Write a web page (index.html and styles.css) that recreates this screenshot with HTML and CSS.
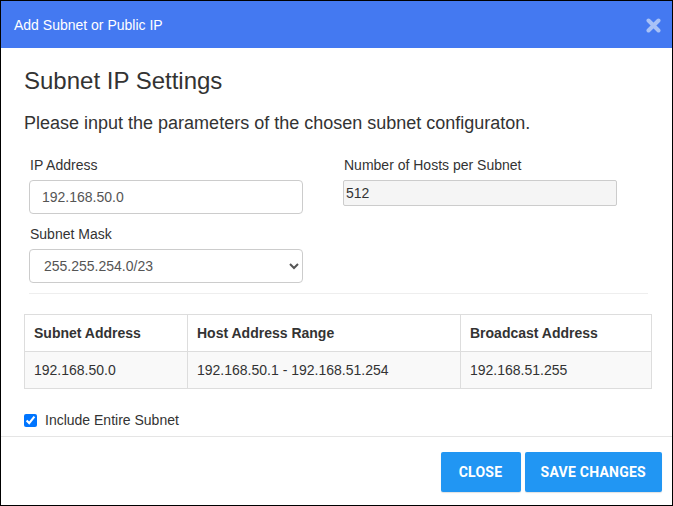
FILE: index.html
```html
<!DOCTYPE html>
<html>
<head>
<meta charset="utf-8">
<link rel="stylesheet" href="styles.css">
</head>
<body>
<div class="dialog">
  <div class="dialog-header">
    <span class="dialog-title">Add Subnet or Public IP</span>
    <svg class="close-icon" width="15" height="15" viewBox="0 0 15 15">
      <path d="M2.5 2.5 L12.5 12.5 M12.5 2.5 L2.5 12.5" stroke="#a9c2f6" stroke-width="4" stroke-linecap="round"/>
    </svg>
  </div>
  <div class="dialog-body">
    <h2 class="section-title">Subnet IP Settings</h2>
    <p class="intro">Please input the parameters of the chosen subnet configuraton.</p>
    <div class="form-grid">
      <div class="form-col">
        <div class="form-group">
          <label class="field-label">IP Address</label>
          <input class="text-input" type="text" value="192.168.50.0">
        </div>
        <div class="form-group">
          <label class="field-label">Subnet Mask</label>
          <select class="select-input">
            <option>255.255.254.0/23</option>
          </select>
        </div>
      </div>
      <div class="form-col">
        <div class="form-group">
          <label class="field-label">Number of Hosts per Subnet</label>
          <input class="readonly-input" type="text" value="512" readonly>
        </div>
      </div>
    </div>
    <hr class="divider">
    <table class="subnet-table">
      <thead>
        <tr>
          <th class="col-a">Subnet Address</th>
          <th class="col-b">Host Address Range</th>
          <th>Broadcast Address</th>
        </tr>
      </thead>
      <tbody>
        <tr>
          <td>192.168.50.0</td>
          <td>192.168.50.1 - 192.168.51.254</td>
          <td>192.168.51.255</td>
        </tr>
      </tbody>
    </table>
    <label class="check-row">
      <input class="check" type="checkbox" checked>
      <span>Include Entire Subnet</span>
    </label>
  </div>
  <div class="dialog-footer">
    <button class="btn">CLOSE</button>
    <button class="btn">SAVE CHANGES</button>
  </div>
</div>
</body>
</html>
```
FILE: styles.css
```css
html, body {
  margin: 0;
  padding: 0;
  background: #fff;
}
body {
  font-family: "Liberation Sans", Arial, sans-serif;
  color: #333;
  font-size: 14px;
}
.dialog {
  width: 673px;
  height: 506px;
  box-sizing: border-box;
  border: 1px solid #000;
  display: flex;
  flex-direction: column;
  background: #fff;
}
.dialog-header {
  height: 47px;
  background: #4479f1;
  display: flex;
  align-items: center;
  justify-content: space-between;
  padding: 0 11px 0 13px;
  flex: none;
}
.dialog-title {
  color: #fff;
  font-size: 14px;
  line-height: 20px;
}
.close-icon {
  display: block;
  margin-top: 1px;
}
.dialog-body {
  padding: 20px 20px 6px 23px;
  flex: none;
}
.section-title {
  margin: 0;
  font-size: 24px;
  line-height: 26px;
  font-weight: normal;
  color: #333;
}
.intro {
  margin: 19px 0 0;
  font-size: 18px;
  line-height: 20px;
  color: #333;
}
.form-grid {
  margin-top: 22px;
  display: grid;
  grid-template-columns: 274px 274px;
  column-gap: 40px;
  padding-left: 5px;
}
.form-group {
  display: flex;
  flex-direction: column;
}
.form-group + .form-group {
  margin-top: 10px;
}
.field-label {
  font-size: 14px;
  line-height: 20px;
  margin-bottom: 5px;
  padding-left: 1px;
  color: #333;
}
.text-input {
  height: 34px;
  box-sizing: border-box;
  border: 1px solid #ccc;
  border-radius: 4px;
  padding: 0 12px;
  font-family: "Liberation Sans", Arial, sans-serif;
  font-size: 14px;
  color: #555;
  margin: 0;
  outline: none;
}
.select-input {
  height: 34px;
  box-sizing: border-box;
  border: 1px solid #ccc;
  border-radius: 4px;
  padding: 0 8px 0 10px;
  font-family: "Liberation Sans", Arial, sans-serif;
  font-size: 14px;
  color: #555;
  background: #fff;
  margin: 0;
}
.readonly-input {
  height: 26px;
  box-sizing: border-box;
  border: 1px solid #ccc;
  border-radius: 2px;
  padding: 0 2px;
  background: #f5f5f5;
  font-family: "Liberation Sans", Arial, sans-serif;
  font-size: 14px;
  color: #333;
  margin: 0;
  outline: none;
}
.divider {
  border: 0;
  border-top: 1px solid #eee;
  height: 0;
  margin: 10px 4px 20px 5px;
}
.subnet-table {
  width: 628px;
  border-collapse: collapse;
  font-size: 14px;
}
.subnet-table th,
.subnet-table td {
  border: 1px solid #ddd;
  padding: 8px 8px 8px 9px;
  line-height: 20px;
  text-align: left;
  color: #333;
}
.subnet-table th {
  font-weight: bold;
}
.subnet-table td {
  background: #f9f9f9;
}
.col-a { width: 145px; }
.col-b { width: 255px; }
.check-row {
  margin-top: 21px;
  display: flex;
  align-items: center;
  height: 20px;
  line-height: 20px;
  font-size: 14px;
}
.check {
  width: 13px;
  height: 13px;
  margin: 0 8px 0 0;
}
.dialog-footer {
  border-top: 1px solid #e5e5e5;
  padding: 15px 10px 13px;
  display: flex;
  justify-content: flex-end;
  gap: 4px;
  flex: none;
}
.btn {
  height: 40px;
  min-width: 80px;
  border: 0;
  border-radius: 2px;
  background: #2196f3;
  color: #fff;
  font-family: Roboto, "Liberation Sans", sans-serif;
  font-weight: bold;
  font-size: 14px;
  letter-spacing: 0.25px;
  padding: 0 16px;
  margin: 0;
  box-shadow: 0 1px 1px rgba(0,0,0,0.12);
}
```
